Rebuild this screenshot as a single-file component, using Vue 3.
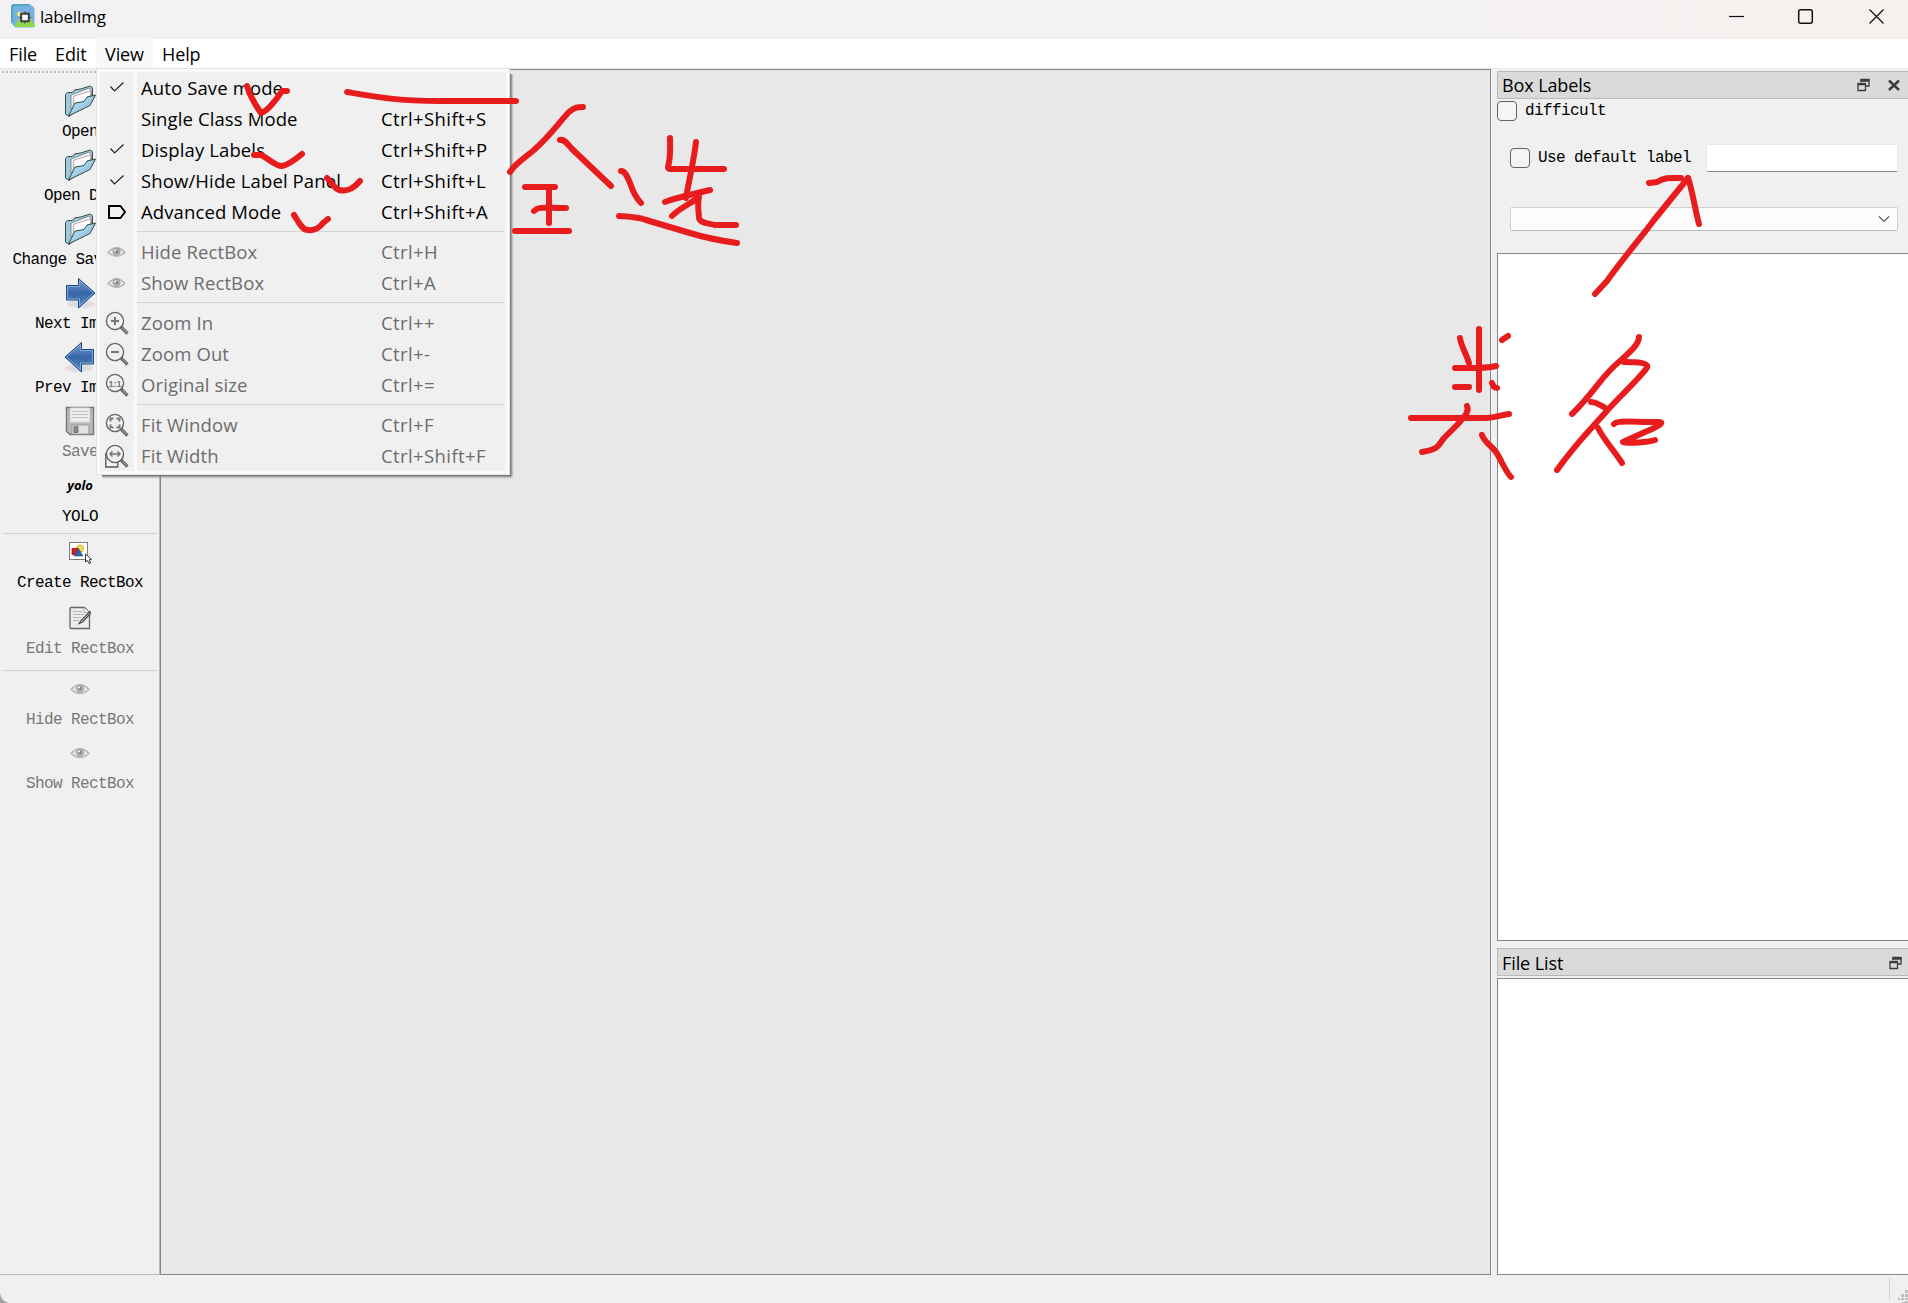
<script setup>
const menus = ['File', 'Edit', 'View', 'Help']

const groups = [
  [
    { label: 'Auto Save mode', key: '', icon: 'check' },
    { label: 'Single Class Mode', key: 'Ctrl+Shift+S', icon: '' },
    { label: 'Display Labels', key: 'Ctrl+Shift+P', icon: 'check' },
    { label: 'Show/Hide Label Panel', key: 'Ctrl+Shift+L', icon: 'check' },
    { label: 'Advanced Mode', key: 'Ctrl+Shift+A', icon: 'tag' },
  ],
  [
    { label: 'Hide RectBox', key: 'Ctrl+H', icon: 'eye', off: true },
    { label: 'Show RectBox', key: 'Ctrl+A', icon: 'eye', off: true },
  ],
  [
    { label: 'Zoom In', key: 'Ctrl++', icon: 'in', off: true },
    { label: 'Zoom Out', key: 'Ctrl+-', icon: 'out', off: true },
    { label: 'Original size', key: 'Ctrl+=', icon: 'one', off: true },
  ],
  [
    { label: 'Fit Window', key: 'Ctrl+F', icon: 'fit', off: true },
    { label: 'Fit Width', key: 'Ctrl+Shift+F', icon: 'width', off: true },
  ],
]

const tools = [
  { label: 'Open', icon: 'folder' },
  { label: 'Open Dir', icon: 'folder' },
  { label: 'Change Save Dir', icon: 'folder' },
  { label: 'Next Image', icon: 'next' },
  { label: 'Prev Image', icon: 'prev' },
  { label: 'Save', icon: 'save', off: true },
  { label: 'YOLO', icon: 'yolo', cls: 'format' },
  { label: 'Create RectBox', icon: 'create', cls: 'create' },
  { label: 'Edit RectBox', icon: 'edit', off: true, cls: 'edit' },
  { label: 'Hide RectBox', icon: 'eye', off: true },
  { label: 'Show RectBox', icon: 'eye', off: true },
]

const strokes = [
  'M247 86 C250 96 256 106 261 113 C266 112 275 102 282 91 L287 91',
  'M347 92 C370 96 395 101 440 101 L516 101',
  'M254 155 L261 155 C268 158 275 166 282 166 C288 165 296 159 302 154',
  'M327 178 C332 182 334 189 339 190 C348 192 354 188 360 181',
  'M294 215 C298 221 302 230 308 230 C316 231 320 227 323 223 L328 219',
  'M510 172 C514 165 522 160 534 150 C552 134 560 121 569 112 C575 107 578 107 583 107',
  'M560 140 C564 139 567 143 572 149 L611 186',
  'M525 187 L555 187', 'M549 190 L549 223', 'M534 211 C539 206 544 208 566 208', 'M515 231 L569 231',
  'M621 171 C625 171 627 176 630 183 C633 192 637 199 641 203',
  'M670 138 C670 150 671 156 668 167 C668 169 670 169 673 169 L724 169',
  'M696 142 C694 160 688 185 686 198',
  'M665 202 C678 197 695 194 710 190',
  'M672 216 C681 207 687 206 699 197 C697 206 699 213 699 218 C700 223 707 223 715 225 L736 225',
  'M619 216 C633 217 638 217 646 220 L690 233 C706 238 716 240 737 243',
  'M1649 183 L1657 182 C1665 177 1672 178 1681 178',
  'M1688 178 L1654 220 C1640 239 1624 257 1607 281 L1595 294',
  'M1688 178 C1692 188 1695 210 1699 224',
  'M1460 338 C1461 346 1466 353 1469 363', 'M1479 329 L1479 390', 'M1455 368 C1470 368 1483 369 1496 366',
  'M1502 340 L1508 336', 'M1455 387 L1469 387', 'M1492 383 L1494 387 L1497 388',
  'M1411 418 L1486 418 C1496 418 1500 415 1509 414',
  'M1467 406 C1470 412 1463 418 1457 425 L1444 438 C1438 445 1440 449 1422 452',
  'M1482 435 C1484 442 1491 445 1496 452 C1502 461 1505 471 1511 477',
  'M1639 337 C1639 344 1631 351 1620 361 C1601 376 1596 391 1572 414',
  'M1624 362 C1635 362 1652 362 1646 369 C1637 381 1616 400 1605 413 C1589 431 1577 442 1557 470',
  'M1591 402 C1597 402 1599 405 1604 407', 'M1598 428 C1604 440 1616 453 1622 463',
  'M1614 424 C1617 420 1631 422 1657 422 C1669 421 1653 429 1645 432 L1623 442 C1627 444 1650 442 1655 440',
]
</script>

<template>
  <div class="window">
    <header class="titlebar">
      <svg class="logo" width="24" height="24" viewBox="0 0 24 24">
        <rect x="0" y="0" width="20" height="20" rx="3" fill="#4b9fc0" />
        <rect x="1.500" y="1.500" width="21" height="21" rx="3" fill="#6bb5d6" />
        <rect x="3" y="3" width="20.500" height="20.500" rx="2" fill="#78b0df" />
        <circle cx="8.500" cy="10" r="2.500" fill="#f4e36c" />
        <path d="M3 23 L9 13.500 L14 19 L19 14 L24 21 V23Z" fill="#91d94b" />
        <rect x="10.200" y="9.700" width="7.600" height="7.600" fill="#fff" stroke="#3c4044" stroke-width="2" />
        <path d="M14 7.500v3M14 16.500v3M8 13.500h3M17 13.500h3" stroke="#3c4044" stroke-width="1.200" />
      </svg>
      <span class="title">labelImg</span>
      <svg class="winbtns" width="160" height="20" viewBox="0 0 160 20" fill="none" stroke="#111">
        <path d="M1 9.500h15" stroke-width="1.200" />
        <rect x="70.700" y="2.700" width="13.600" height="13.600" rx="2" stroke-width="1.500" />
        <path d="M141.500 2.500l14 14M155.500 2.500l-14 14" stroke-width="1.300" />
      </svg>
    </header>

    <nav class="menubar">
      <span v-for="m in menus" :key="m" :class="['top', m.toLowerCase()]">{{ m }}</span>
    </nav>

    <main class="body">
      <aside class="toolbar">
        <div v-for="(t, i) in tools" :key="i" :class="['tool', t.cls, { off: t.off }]">
          <div class="tool-icon">
            <svg v-if="t.icon === 'folder'" width="32" height="32" viewBox="0 0 32 32">
              <defs>
                <linearGradient id="fold" x1="0" y1="0" x2="1" y2="1">
                  <stop offset="0" stop-color="#d3eaf4" /><stop offset="1" stop-color="#6fb0d2" />
                </linearGradient>
              </defs>
              <path d="M1.500 29V9.500l2-2h5l2-2.500 6-1 10-3 2 2v8L6 31H4z" fill="#9cc8dc" stroke="#37474f" stroke-width="1" />
              <path d="M7 24V10l18-7 3 4-4 12z" fill="#f4f4f4" stroke="#666" stroke-width=".7" />
              <path d="M9 22l1-11 17-5-1 8z" fill="#fff" stroke="#888" stroke-width=".7" />
              <path d="M4.500 31L11 18l9-1.500 3-4.500 8.500-2L26 20.500z" fill="url(#fold)" stroke="#37474f" stroke-width="1" stroke-linejoin="round" />
            </svg>
            <svg v-else-if="t.icon === 'next' || t.icon === 'prev'" :class="{ flip: t.icon === 'prev' }" width="32" height="32" viewBox="0 0 32 32">
              <defs>
                <linearGradient id="arr" x1="0" y1="0" x2="0" y2="1">
                  <stop offset="0" stop-color="#7aa2cf" /><stop offset=".5" stop-color="#3465a4" /><stop offset="1" stop-color="#5d8fca" />
                </linearGradient>
              </defs>
              <ellipse cx="17" cy="27" rx="14" ry="4" fill="#000" opacity=".08" />
              <path d="M2.500 8.500h12V1.500L31 16 14.500 31v-8h-12z" fill="url(#arr)" stroke="#204a87" />
              <path d="M3.500 9.500h12V4L29.500 16 15.500 28.500V22h-12z" fill="none" stroke="#8fb3dc" stroke-width=".8" />
            </svg>
            <svg v-else-if="t.icon === 'save'" width="32" height="32" viewBox="0 0 32 32">
              <path d="M2.500 2.500h27v27H6l-3.500-3z" fill="#b9b9b9" stroke="#777" stroke-width="1.400" />
              <path d="M6.500 3h19v14h-19z" fill="#eee" stroke="#ddd" />
              <path d="M8 6.500h16M8 9.500h16M8 12.500h16" stroke="#c0c0c0" />
              <path d="M8 20h17v9H8z" fill="#e3e3e3" stroke="#999" />
              <path d="M10 21.500h4v6h-4z" fill="#8a8a8a" stroke="#777" />
            </svg>
            <span v-else-if="t.icon === 'yolo'" class="yolo">yolo</span>
            <svg v-else-if="t.icon === 'create'" width="24" height="24" viewBox="0 0 24 24">
              <rect x="1.500" y="2.500" width="18" height="17" fill="#fff" stroke="#000" stroke-dasharray="1 1" />
              <circle cx="12" cy="8.500" r="3.500" fill="#f6e05a" stroke="#c4a000" stroke-width=".7" />
              <rect x="4" y="8.500" width="6" height="6" fill="#d31b1b" stroke="#960b0b" stroke-width=".7" />
              <path d="M10.500 8.500l4.500 7.500h-9z" fill="#3465a4" stroke="#204a87" stroke-width=".6" />
              <path d="M17.500 14v8l2-1.500 1.500 3 1.500-.7-1.300-3 2.300-.5z" fill="#fff" stroke="#222" stroke-width=".9" />
            </svg>
            <svg v-else-if="t.icon === 'edit'" width="24" height="24" viewBox="0 0 24 24">
              <path d="M3 1.500h13.500l5 5v16H3c-.6 0-1-.4-1-1v-19c0-.6.4-1 1-1z" fill="#ececec" stroke="#666" stroke-width="1.300" />
              <path d="M16 1.500v5h5.500" fill="#fafafa" stroke="#999" stroke-width=".8" />
              <path d="M5 5.500h9M5 8.500h11M5 11.500h8M5 14.500h6" stroke="#b5b5b5" />
              <path d="M22 5.500l-9 9-2 3 3.500-1.500 8-8.500z" fill="#ddd" stroke="#444" stroke-width="1.100" />
            </svg>
            <svg v-else width="20" height="12" viewBox="0 0 20 12">
              <path d="M1 6.500Q10-3 19 6.500Q10 14.500 1 6.500z" fill="#e6e6e6" stroke="#b4b4b4" stroke-width="1.300" />
              <circle cx="10" cy="5.700" r="3.500" fill="#bbb" stroke="#999" /><circle cx="10" cy="5.500" r="1.700" fill="#777" />
              <circle cx="9" cy="4.500" r="1" fill="#fff" />
            </svg>
          </div>
          <div class="tool-label">{{ t.label }}</div>
        </div>
      </aside>

      <section class="canvas"></section>

      <aside class="docks">
        <div class="dock-head">
          <span>Box Labels</span>
          <svg width="44" height="14" viewBox="0 0 44 14" fill="none" stroke="#3c3c3c">
            <path d="M4 4V1.500h8V8H9" stroke-width="1.300" /><path d="M3.500 2.500h9" stroke-width="2.500" />
            <path d="M1 6v6.500h7.500V6" stroke-width="1.300" /><path d="M.5 6h8.500" stroke-width="2.500" />
            <path d="M32 2.500l10 9.500M42 2.500L32 12" stroke-width="2.500" />
          </svg>
        </div>
        <label class="difficult"><i class="box"></i>difficult</label>
        <div class="default-row"><label><i class="box"></i>Use default label</label><div class="field"></div></div>
        <div class="combo"><svg width="12" height="8" viewBox="0 0 12 8"><path d="M1 1.500l5 5 5-5" fill="none" stroke="#555" stroke-width="1.100" /></svg></div>
        <div class="list labels"></div>
        <div class="dock-head files">
          <span>File List</span>
          <svg width="14" height="14" viewBox="0 0 14 14" fill="none" stroke="#3c3c3c">
            <path d="M4 4V1.500h8V8H9" stroke-width="1.300" /><path d="M3.500 2.500h9" stroke-width="2.500" />
            <path d="M1 6v6.500h7.500V6" stroke-width="1.300" /><path d="M.5 6h8.500" stroke-width="2.500" />
          </svg>
        </div>
        <div class="list names"></div>
      </aside>
    </main>

    <footer class="status">
      <svg class="corner" width="10" height="10" viewBox="0 0 10 10"><path d="M0 0Q1 8 9 10H0z" fill="#a2a2a2" /></svg>
      <i class="divider"></i>
      <svg width="11" height="14" viewBox="0 0 11 14" fill="#bdbdbd">
        <path d="M8 1h3v3H8zM4 5h3v3H4zM8 5h3v3H8zM1 9h2v2H1zM4 9h3v2H4zM8 9h3v2H8zM5 13l6-1v2H5z" />
      </svg>
    </footer>

    <div class="popup">
      <div class="popup-inner">
        <div v-for="(g, gi) in groups" :key="gi" class="group">
          <div v-for="r in g" :key="r.label" :class="['row', { off: r.off }]">
            <div class="row-icon">
              <svg v-if="r.icon === 'check'" width="24" height="24" viewBox="0 0 24 24"><path d="M5.500 10.500l4 4.500L18.500 6.500" fill="none" stroke="#222" stroke-width="1.200" /></svg>
              <svg v-else-if="r.icon === 'tag'" width="24" height="24" viewBox="0 0 24 24"><path d="M4 6h11.500l4.500 6-4.500 6H4z" fill="none" stroke="#000" stroke-width="2" stroke-linejoin="round" /></svg>
              <svg v-else-if="r.icon === 'eye'" width="24" height="24" viewBox="-2 -6 24 24">
                <path d="M1 6.500Q9.500-3 18 6.500Q9.500 14 1 6.500z" fill="#e6e6e6" stroke="#b4b4b4" stroke-width="1.300" />
                <circle cx="9.500" cy="5.700" r="3.500" fill="#bbb" stroke="#999" /><circle cx="9.500" cy="5.500" r="1.700" fill="#777" />
                <circle cx="8.500" cy="4.500" r="1" fill="#fff" />
              </svg>
              <svg v-else-if="r.icon" width="24" height="24" viewBox="0 0 24 24" fill="none">
                <path v-if="r.icon === 'width'" d="M.800 9v14h12v-6" fill="#f2f2f2" stroke="#555" stroke-width="1.300" />
                <path d="M16 16l6.500 6.500" stroke="#666" stroke-width="3.200" /><path d="M17.500 17l4.500 4.500" stroke="#b5b5b5" stroke-width="1" />
                <circle cx="10" cy="10" r="8.500" fill="#eee" stroke="#666" stroke-width="1.500" />
                <circle cx="10" cy="10" r="7" stroke="#fff" stroke-width="1" />
                <path v-if="r.icon === 'in'" d="M6 10h8M10 6v8" stroke="#777" stroke-width="2" />
                <path v-else-if="r.icon === 'out'" d="M6 10h8" stroke="#777" stroke-width="2" />
                <path v-else-if="r.icon === 'fit'" d="M5.500 8.500v-3h3M11.500 5.500h3v3M14.500 11.500v3h-3M8.500 14.500h-3v-3" stroke="#777" stroke-width="2" />
                <path v-else-if="r.icon === 'width'" d="M5 10h10M7.500 7.500L5 10l2.500 2.500M12.500 7.500L15 10l-2.500 2.500" stroke="#777" stroke-width="1.500" />
                <text v-else x="10" y="13.800" text-anchor="middle" class="ratio">1:1</text>
              </svg>
            </div>
            <span class="row-label">{{ r.label }}</span><span class="row-key">{{ r.key }}</span>
          </div>
        </div>
      </div>
    </div>

    <svg class="ink" width="1908" height="1303" viewBox="0 0 1908 1303">
      <path v-for="(s, i) in strokes" :key="i" :d="s" />
    </svg>
  </div>
</template>

<style>
body { margin: 0; overflow: hidden; }
</style>

<style scoped>
.window { position: relative; width: 1908px; height: 1303px; overflow: hidden; display: flex; flex-direction: column; background: #f0f0f0; font: 18px "Open Sans", "Noto Sans", sans-serif; color: #000; }
.titlebar { height: 39px; box-sizing: border-box; display: flex; align-items: flex-start; padding: 4px 20px 0 11px; background: linear-gradient(90deg, #f2f1f4, #f3f2f2 65%, #f6f1ef); }
.title { margin-left: 5px; font-size: 17px; line-height: 25px; letter-spacing: -.25px; }
.winbtns { margin: 3px 0 0 auto; }
.menubar { height: 29px; flex: none; display: flex; background: #fff; border-bottom: 1px solid #eaeaea; line-height: 30px; }
.top { box-sizing: border-box; white-space: nowrap; padding-left: 8px; }
.file { width: 46px; }
.edit.top { width: 50px; }
.view { width: 57px; background: #f9f9f9; }
.help { width: 56px; }
.body { height: 1206px; flex: none; display: flex; }
.toolbar { width: 159px; box-sizing: content-box; border-right: 1px solid #b9b9b9; border-bottom: 1px solid #b9b9b9; height: 1205px; flex: none; background: repeating-linear-gradient(90deg, #bbb 0 2px, #f0f0f0 2px 4px) 2px 2px / 157px 2px no-repeat; }
.tool { height: 64px; width: 160px; display: flex; flex-direction: column; align-items: center; }
.tool:first-child { margin-top: 16px; }
.tool-icon { height: 32px; flex: none; display: flex; align-items: center; justify-content: center; }
.tool-label, .docks label { font: 16px/26px "Liberation Mono", monospace; letter-spacing: -.6px; white-space: pre; }
.tool-label { padding-top: 2px; }
.tool-icon svg { display: block; }
.off { color: #787878; }
.top.file, .top.edit, .top.view, .top.help { padding-left: 9px; letter-spacing: -.1px; }
.flip { transform: scaleX(-1); }
.yolo { font: italic 700 13px/16px "Open Sans", sans-serif; letter-spacing: -.1px; }
.tool.format { height: 67px; background: linear-gradient(#d0d0d0, #d0d0d0) 3px 64px / 154px 1px no-repeat; }
.format .tool-label { line-height: 29px; }
.tool.create { height: 66px; }
.create .tool-label { line-height: 27px; }
.tool.edit { height: 71px; background: linear-gradient(#d0d0d0, #d0d0d0) 3px 68px / 154px 1px no-repeat; }
.canvas { width: 1331px; box-sizing: border-box; border: 1px solid #828790; background: #e8e8e8; }
.docks { width: 411px; margin-left: 6px; display: flex; flex-direction: column; }
.dock-head { height: 28px; flex: none; box-sizing: border-box; margin-top: 2px; padding: 0 7px 0 4px; border: 1px solid #b9b9b9; border-right: 0; background: #dadada; display: flex; align-items: center; justify-content: space-between; letter-spacing: -.1px; }
.box { width: 20px; height: 20px; box-sizing: border-box; border: 1px solid #626262; border-radius: 4px; background: #f5f5f5; margin-right: 8px; }
.docks label { display: flex; align-items: center; }
.difficult { height: 24px; padding-bottom: 1px; }
.default-row { display: flex; align-items: center; height: 28px; margin: 20px 10px 0 13px; justify-content: space-between; }
.field { width: 192px; height: 28px; box-sizing: border-box; background: #fff; border: 1px solid #e9e9e9; border-bottom-color: #868686; border-radius: 2px; }
.combo { height: 24px; box-sizing: border-box; margin: 35px 10px 0 13px; border: 1px solid #d0d0d0; border-bottom-color: #bbb; border-radius: 2px; background: #fdfdfd; display: flex; align-items: center; justify-content: flex-end; padding-right: 7px; }
.list { box-sizing: border-box; border: 1px solid #828790; border-right: 0; background: #fff; }
.labels { height: 688px; margin-top: 22px; }
.dock-head.files { margin-top: 7px; padding: 1px 5px 0 4px; }
.names { height: 297px; margin-top: 2px; }
.status { height: 28px; display: flex; align-items: flex-end; }
.corner { margin-right: auto; }
.divider { width: 1px; height: 24px; background: #d5d5d5; margin: 0 7px 2px 0; align-self: flex-end; }
.popup { position: absolute; left: 96px; top: 68px; width: 414px; height: 407px; box-sizing: border-box; border: 1px solid #e2e2e2; background: #fafafa; padding: 3px; box-shadow: 2px 2px 2px #777; clip-path: polygon(0 0, 414px 0, 414px 6px, 422px 6px, 422px 415px, 6px 415px, 6px 407px, 0 407px); }
.popup-inner { background: linear-gradient(90deg, #f0f0f0 34px, #fafafa 34px 37px, #f0f0f0 37px); height: 399px; }
.group + .group { padding-top: 9px; background: linear-gradient(#d5d5d5, #d5d5d5) 37px 4px / 368px 1px no-repeat; }
.row { height: 31px; display: flex; align-items: center; white-space: nowrap; font-size: 18.500px; }
.row.off { color: #6d6d6d; }
.row-icon { width: 34px; display: flex; justify-content: center; padding-right: 2px; box-sizing: border-box; padding-left: 1px; }
.row-label { width: 247px; padding-left: 7px; box-sizing: border-box; letter-spacing: .12px; }
.row-key { letter-spacing: .4px; }
.ratio { font: 700 9px "Liberation Sans", sans-serif; fill: #777; }
.ink { position: absolute; inset: 0; fill: none; stroke: #e81c1c; stroke-width: 6; stroke-linecap: round; stroke-linejoin: round; }
</style>
